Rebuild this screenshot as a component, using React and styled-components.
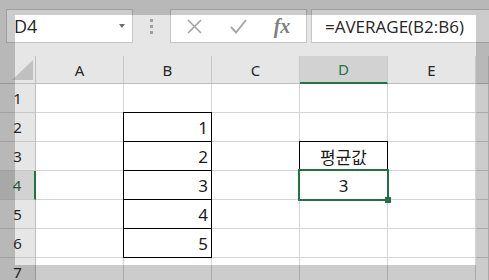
import React from 'react';
import styled, { createGlobalStyle } from 'styled-components';

const GlobalStyle = createGlobalStyle`
  html, body { margin: 0; padding: 0; background: #e6e6e6; }
  body { font-family: "Noto Sans", "Noto Sans CJK KR", sans-serif; }
`;

const Window = styled.div`
  position: relative;
  width: 489px;
  height: 280px;
  overflow: hidden;
  background: #e6e6e6;
`;

const Toolbar = styled.div`
  display: flex;
  align-items: stretch;
  height: 34px;
  padding: 9px 0 13px 6px;
`;

const NameBox = styled.div`
  box-sizing: border-box;
  width: 127px;
  display: flex;
  align-items: center;
  justify-content: space-between;
  padding: 0 7px 0 7px;
  background: #fff;
  border: 1px solid #c6c6c6;
  font-family: "Open Sans", sans-serif;
  font-size: 18px;
  color: #262626;
`;

const Caret = styled.span`
  width: 0;
  height: 0;
  border-left: 3.5px solid transparent;
  border-right: 3.5px solid transparent;
  border-top: 4px solid #6b6b6b;
`;

const Grip = styled.div`
  width: 37px;
  display: flex;
  flex-direction: column;
  align-items: center;
  justify-content: center;
  gap: 3px;
  span {
    width: 3px;
    height: 3px;
    background: #9e9e9e;
  }
`;

const FxBox = styled.div`
  box-sizing: border-box;
  width: 137px;
  display: flex;
  padding-left: 1px;
  background: #fff;
  border: 1px solid #c6c6c6;
`;

const FxSlot = styled.div`
  width: 44px;
  display: flex;
  align-items: center;
  justify-content: center;
  color: #808080;
  font-family: "Liberation Serif", serif;
  font-style: italic;
  font-weight: bold;
  font-size: 20px;
`;

const Formula = styled.div`
  flex: 1;
  margin-left: 4px;
  margin-right: -2px;
  display: flex;
  align-items: center;
  padding-left: 13px;
  background: #fff;
  border: 1px solid #c6c6c6;
  font-family: "Open Sans", sans-serif;
  font-size: 17px;
  color: #262626;
`;

const Sheet = styled.div`
  display: grid;
  grid-template-columns: 36px repeat(5, 88px) 1fr;
  grid-template-rows: 28px;
  grid-auto-rows: 29px;
  background: #fff;
`;

const Corner = styled.div`
  box-sizing: border-box;
  background: #e6e6e6;
  border-right: 1px solid #bdbdbd;
  border-bottom: 1px solid #bdbdbd;
  svg { display: block; }
`;

const ColHead = styled.div`
  box-sizing: border-box;
  display: flex;
  align-items: center;
  justify-content: center;
  background: ${p => (p.$active ? '#d2d2d2' : '#e6e6e6')};
  color: ${p => (p.$active ? '#217346' : '#262626')};
  border-right: 1px solid #c8c8c8;
  border-bottom: ${p => (p.$active ? '2px solid #217346' : '1px solid #bdbdbd')};
  font-size: 15px;
`;

const RowHead = styled.div`
  box-sizing: border-box;
  display: flex;
  align-items: center;
  justify-content: center;
  background: ${p => (p.$active ? '#d2d2d2' : '#e6e6e6')};
  color: ${p => (p.$active ? '#1d5e3a' : '#262626')};
  border-right: ${p => (p.$active ? '2px solid #217346' : '1px solid #bdbdbd')};
  border-bottom: 1px solid #c8c8c8;
  font-size: 15px;
`;

const Cell = styled.div`
  box-sizing: border-box;
  position: ${p => (p.$boxed || p.$selected ? 'relative' : 'static')};
  display: flex;
  align-items: center;
  justify-content: ${p => (p.$align === 'right' ? 'flex-end' : 'center')};
  padding: 0 3px;
  border-right: 1px solid #d4d4d4;
  border-bottom: 1px solid #d4d4d4;
  font-size: 17px;
  color: #1a1a1a;
  &::after {
    content: ${p => (p.$boxed || p.$selected ? "''" : 'none')};
    position: absolute;
    inset: ${p => (p.$selected ? '-2px' : '-1px')};
    border: ${p => (p.$selected ? '2px solid #217346' : '1px solid #000')};
    pointer-events: none;
  }
`;

const FillHandle = styled.span`
  position: absolute;
  right: -4px;
  bottom: -4px;
  width: 6px;
  height: 6px;
  background: #217346;
  z-index: 2;
`;

const Spotlight = styled.div`
  position: absolute;
  left: 15px;
  top: 15px;
  width: 461px;
  height: 250px;
  box-shadow: 0 0 0 600px rgba(0, 0, 0, 0.2);
  pointer-events: none;
  z-index: 10;
`;

const cols = ['A', 'B', 'C', 'D', 'E', ''];

const data = {
  '2B': { v: '1', align: 'right', boxed: true },
  '3B': { v: '2', align: 'right', boxed: true },
  '4B': { v: '3', align: 'right', boxed: true },
  '5B': { v: '4', align: 'right', boxed: true },
  '6B': { v: '5', align: 'right', boxed: true },
  '3D': { v: '평균값', boxed: true },
  '4D': { v: '3', selected: true },
};

export default function App() {
  const rows = [1, 2, 3, 4, 5, 6, 7];

  return (
    <Window>
      <GlobalStyle />
      <Toolbar>
        <NameBox>
          D4
          <Caret />
        </NameBox>
        <Grip>
          <span />
          <span />
          <span />
        </Grip>
        <FxBox>
          <FxSlot>
            <svg width="15" height="15" viewBox="0 0 15 15">
              <path d="M1 1 L14 14 M14 1 L1 14" stroke="#a3a3a3" strokeWidth="1.6" fill="none" />
            </svg>
          </FxSlot>
          <FxSlot>
            <svg width="17" height="15" viewBox="0 0 17 15">
              <path d="M1 8 L6 13.5 L16 1" stroke="#a8a8a8" strokeWidth="2" fill="none" />
            </svg>
          </FxSlot>
          <FxSlot>fx</FxSlot>
        </FxBox>
        <Formula>=AVERAGE(B2:B6)</Formula>
      </Toolbar>

      <Sheet>
        <Corner>
          <svg width="35" height="27" viewBox="0 0 35 27">
            <polygon points="12,24 33,24 33,4" fill="#c0c0c0" />
          </svg>
        </Corner>
        {cols.map((c, i) => (
          <ColHead key={i} $active={c === 'D'}>{c}</ColHead>
        ))}
        {rows.map(r => (
          <React.Fragment key={r}>
            <RowHead $active={r === 4}>{r}</RowHead>
            {cols.map((c, i) => {
              const cell = data[`${r}${c}`] || {};
              return (
                <Cell key={i} $align={cell.align} $boxed={cell.boxed} $selected={cell.selected}>
                  {cell.v}
                  {cell.selected && <FillHandle />}
                </Cell>
              );
            })}
          </React.Fragment>
        ))}
      </Sheet>

      <Spotlight />
    </Window>
  );
}
